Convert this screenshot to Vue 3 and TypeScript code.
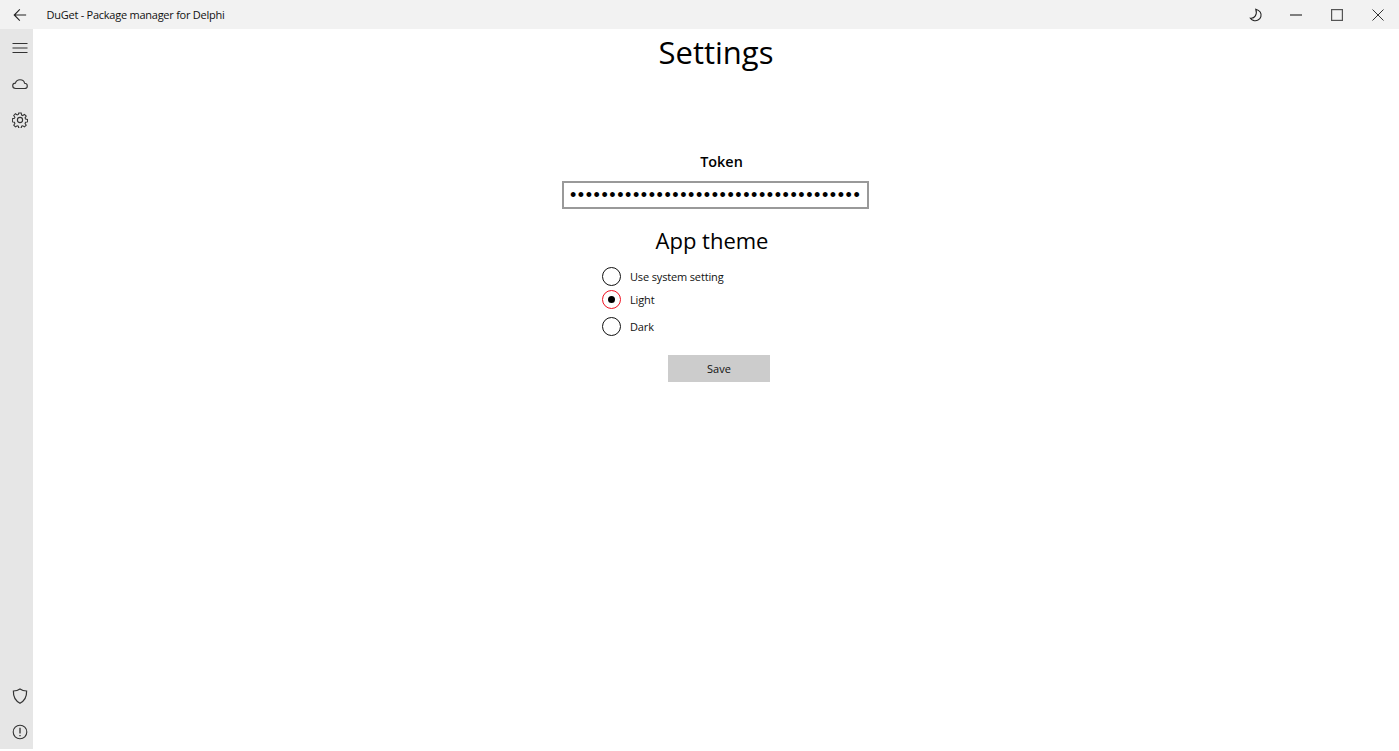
<script setup lang="ts">
import { ref } from 'vue'

const token = ref('x'.repeat(37))
const theme = ref('light')
const themes = [
  { id: 'system', label: 'Use system setting', cls: 'opt-system' },
  { id: 'light', label: 'Light', cls: 'opt-light' },
  { id: 'dark', label: 'Dark', cls: 'opt-dark' },
]
</script>

<template>
  <div class="app">
    <header class="titlebar">
      <button class="back" aria-label="Back">
        <svg width="14" height="14" viewBox="0 0 16 16" fill="none" stroke="#222" stroke-width="1.25">
          <path d="M1.5 8H15M7.8 1.6 1.4 8l6.4 6.4" />
        </svg>
      </button>
      <span class="app-title">DuGet - Package manager for Delphi</span>
      <div class="win-controls">
        <svg class="moon" width="14" height="14" viewBox="0 0 14 14" fill="none" stroke="#222" stroke-width="1.1">
          <path d="M6.8 1.2C10.800 2.200 12.800 5.200 11.900 8.600 11 11.800 7.600 13.400 4.400 12.400 3 12 2 11.200 1.400 10.200 5.600 10.800 8.600 6.400 6.800 1.200Z" />
        </svg>
        <svg class="min" width="12" height="2" viewBox="0 0 12 2"><rect width="12" height="1.2" y="0.4" fill="#333" /></svg>
        <svg class="max" width="12" height="12" viewBox="0 0 12 12" fill="none" stroke="#555" stroke-width="1.2">
          <rect x="0.6" y="0.6" width="10.8" height="10.8" />
        </svg>
        <svg class="close" width="12" height="12" viewBox="0 0 12 12" fill="none" stroke="#333" stroke-width="1">
          <path d="M0.5 0.5 11.5 11.5M11.5 0.5 0.5 11.5" />
        </svg>
      </div>
    </header>

    <div class="body">
      <nav class="sidebar">
        <div class="nav-top">
          <button class="nav-btn" aria-label="Menu">
            <svg width="16" height="16" viewBox="0 0 16 16" stroke="#333" stroke-width="1.1">
              <path d="M0.500 3.500H15.500M0.500 8H15.500M0.500 12.500H15.500" />
            </svg>
          </button>
          <button class="nav-btn" aria-label="Packages">
            <svg width="16" height="16" viewBox="0 0 16 16" fill="none" stroke="#333" stroke-width="1.1">
              <path d="M3.700 12.500C2 12.500.7 11.300.7 9.800c0-1.500 1.200-2.700 2.700-2.700C4 5.200 5.800 3.800 8 3.800c2.400 0 4.300 1.600 4.600 3.500 1.500.1 2.700 1.200 2.700 2.600 0 1.500-1.200 2.600-2.700 2.600Z" />
            </svg>
          </button>
          <button class="nav-btn" aria-label="Settings">
            <svg width="16" height="16" viewBox="0 0 16 16" fill="none" stroke="#333" stroke-width="1.1">
              <circle cx="8" cy="8" r="2.600" />
              <path d="M6.700.8h2.600l.4 2.100 1.200.5 1.800-1.200 1.800 1.800-1.200 1.800.5 1.200 2.100.4v2.600l-2.100.4-.5 1.200 1.200 1.800-1.800 1.800-1.800-1.200-1.200.5-.4 2.100H6.700l-.4-2.100-1.200-.5-1.800 1.200-1.800-1.800 1.200-1.800-.5-1.200-2.100-.4V6.700l2.100-.4.5-1.200L1.500 3.300l1.800-1.800 1.800 1.200 1.200-.5Z" transform="translate(.3 .3) scale(.96)" />
            </svg>
          </button>
        </div>
        <div class="nav-bottom">
          <button class="nav-btn" aria-label="Security">
            <svg width="16" height="16" viewBox="0 0 16 16" fill="none" stroke="#333" stroke-width="1.2">
              <path d="M8 .9C10 2.300 12 2.900 14.600 3c.2 5.400-1.600 9.600-6.600 12.200C3 12.600 1.200 8.400 1.400 3 4 2.900 6 2.300 8 .9Z" />
            </svg>
          </button>
          <button class="nav-btn" aria-label="About">
            <svg width="16" height="16" viewBox="0 0 16 16" fill="none" stroke="#333" stroke-width="1.1">
              <circle cx="8" cy="8" r="6.800" />
              <path d="M8 3.800V9.600M8 11V12.200" stroke-width="1.300" />
            </svg>
          </button>
        </div>
      </nav>

      <main class="content">
        <h1 class="page-title">Settings</h1>
        <form class="form" @submit.prevent>
          <label class="token-label" for="token">Token</label>
          <input id="token" v-model="token" class="token-input" type="password" />
          <h2 class="theme-title">App theme</h2>
          <div class="options">
            <label v-for="t in themes" :key="t.id" class="option" :class="t.cls">
              <input v-model="theme" class="radio-input" type="radio" name="theme" :value="t.id" />
              <span class="radio" :class="{ checked: theme === t.id }"></span>
              <span class="option-text">{{ t.label }}</span>
            </label>
          </div>
          <button class="save" type="submit">Save</button>
        </form>
      </main>
    </div>
  </div>
</template>

<style>
html, body { margin: 0; background: #fff; overflow: hidden; }
</style>

<style scoped>
.app {
  height: 751px;
  width: 1399px;
  display: flex;
  flex-direction: column;
  font-family: "Open Sans", "Noto Sans", "Liberation Sans", sans-serif;
  color: #000;
  background: #fff;
}
button { border: 0; background: none; padding: 0; font: inherit; color: inherit; }
.titlebar {
  height: 29px;
  flex: none;
  background: #f2f2f2;
  display: flex;
  align-items: center;
}
.back { width: 14px; height: 14px; margin-left: 13px; display: flex; }
.app-title { margin-left: 19.500px; font-size: 11px; letter-spacing: -0.25px; color: #111; }
.win-controls { margin-left: auto; display: flex; align-items: center; }
.moon { margin-right: 27px; }
.min { margin-right: 29px; }
.max { margin-right: 29px; }
.close { margin-right: 15px; }
.body { flex: 1; display: flex; min-height: 0; }
.sidebar {
  width: 33px;
  height: 720px;
  flex: none;
  background: #e6e6e6;
  display: flex;
  flex-direction: column;
  justify-content: space-between;
}
.nav-top { display: flex; flex-direction: column; padding-top: 1px; }
.nav-bottom { display: flex; flex-direction: column; margin-bottom: -1px; }
.nav-btn {
  width: 33px;
  height: 36px;
  display: flex;
  align-items: center;
  padding-left: 12px;
  box-sizing: border-box;
}
.content {
  flex: 1;
  display: flex;
  flex-direction: column;
  align-items: center;
}
.page-title {
  margin: 0;
  height: 46px;
  line-height: 46px;
  font-size: 31px;
  font-weight: 400;
}
.form {
  width: 306px;
  margin: 76px 2px 0 0;
  display: flex;
  flex-direction: column;
}
.token-label {
  text-align: center;
  padding-left: 13px;
  font-size: 14.400px;
  font-weight: 600;
  line-height: 22px;
}
.token-input {
  margin-top: 8px;
  width: 307px;
  height: 28px;
  box-sizing: border-box;
  border: 2px solid #999;
  padding: 0 6px;
  outline: none;
  font: 400 18px "Liberation Sans", sans-serif;
  letter-spacing: 1.570px;
  color: #000;
}
.theme-title {
  margin: 15px 0 0;
  padding-right: 6px;
  text-align: center;
  height: 33px;
  line-height: 33px;
  font-size: 22px;
  font-weight: 400;
}
.options {
  margin-top: 9px;
  padding-left: 40px;
  display: flex;
  flex-direction: column;
}
.option { display: flex; align-items: center; position: relative; }
.opt-system { height: 20px; }
.opt-light { height: 20px; margin-top: 3px; }
.opt-dark { height: 20px; margin-top: 7px; }
.radio-input { position: absolute; opacity: 0; width: 20px; height: 20px; margin: 0; }
.radio {
  width: 19px;
  height: 19px;
  box-sizing: border-box;
  border: 1.8px solid #111;
  border-radius: 50%;
  flex: none;
  display: flex;
  align-items: center;
  justify-content: center;
}
.radio.checked { border-color: #f01020; }
.radio.checked::after {
  content: "";
  width: 7px;
  height: 7px;
  border-radius: 50%;
  background: #000;
}
.option-text {
  margin-left: 9px;
  padding-top: 2px;
  font-size: 11px;
  letter-spacing: -0.15px;
  line-height: 20px;
  color: #111;
}
.save {
  margin: 19px 0 0 106px;
  width: 102px;
  height: 27px;
  background: #ccc;
  font-size: 11px;
  color: #111;
}
</style>
